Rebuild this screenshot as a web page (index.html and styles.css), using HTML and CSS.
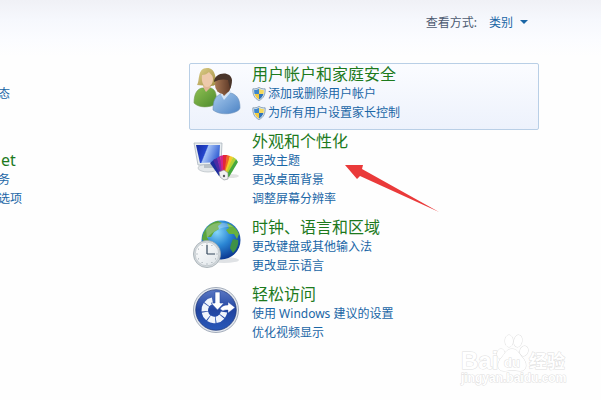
FILE: index.html
```
<!DOCTYPE html>
<html lang="zh-CN">
<head>
    <meta charset="UTF-8">
    <meta name="viewport" content="width=device-width, initial-scale=1.0">
    <title>控制面板</title>
    <link rel="stylesheet" href="styles.css">
</head>
<body>
    <!-- shared shield symbol -->
    <svg class="symbols" aria-hidden="true">
        <symbol id="shield" viewBox="0 0 16 16">
            <path d="M8 .5C6 1.800 3.600 2.300 1 2.100c-.4 6.600 1.900 11 7 13.400 5.100-2.400 7.400-6.800 7-13.400C12.400 2.300 10 1.800 8 .5z" fill="#dbe8f2" stroke="#66839b" stroke-width=".8"/>
            <path d="M8 2C6.500 2.900 4.600 3.400 2.500 3.400 2.400 5.200 2.500 6.700 2.900 8H8z" fill="#3d86cc"/>
            <path d="M8 2c1.500.9 3.400 1.400 5.500 1.400.1 1.800 0 3.300-.4 4.600H8z" fill="#f5d95c"/>
            <path d="M2.900 8C3.800 10.800 5.500 12.800 8 14.200V8z" fill="#f0cb42"/>
            <path d="M13.100 8C12.200 10.800 10.500 12.800 8 14.200V8z" fill="#2f72b8"/>
        </symbol>
    </svg>

    <header class="toolbar">
        <label for="viewBy">查看方式:</label>
        <span class="view-select">
            <select id="viewBy">
                <option>类别</option>
            </select>
        </span>
    </header>

    <main class="panel">
        <div class="column column-left">
            <section class="category tall">
                <a href="#" class="second-line">态</a>
            </section>
            <section class="category">
                <h2><a href="#">et</a></h2>
                <a href="#">务</a>
                <a href="#">选项</a>
            </section>
        </div>

        <div class="column column-right">
            <section class="category active">
                <svg class="icon" viewBox="0 0 48 48" aria-hidden="true">
                    <defs>
                        <linearGradient id="green" x1="0" y1="0" x2="1" y2="1"><stop offset="0" stop-color="#8fc052"/><stop offset="1" stop-color="#4c8a2c"/></linearGradient>
                        <linearGradient id="shirt" x1="0" y1="0" x2="1" y2="1"><stop offset="0" stop-color="#a9cbef"/><stop offset="1" stop-color="#4c83c4"/></linearGradient>
                        <linearGradient id="hair" x1="0" y1="0" x2="1" y2="1"><stop offset="0" stop-color="#ded08a"/><stop offset="1" stop-color="#a18c42"/></linearGradient>
                        <linearGradient id="face" x1="0" y1="0" x2="1" y2="0"><stop offset="0" stop-color="#a77754"/><stop offset="1" stop-color="#5b3726"/></linearGradient>
                    </defs>
                    <path d="M1 36c0-9 3-14 8-15l9 0c5 2 6 7 5 16-7 4-17 4-22-1z" fill="url(#green)" stroke="#739950" stroke-width=".6"/>
                    <path d="M10 20l3 5 5-5-1-5h-6z" fill="#e0b795"/>
                    <path d="M4 18C7 14 4 1 14 1c9 0 8 10 10 15-2 3-5 3-8 3z" fill="url(#hair)"/>
                    <path d="M9 8c3 0 5-1 7-3 2 3 4 3 4 7 0 5-3 8-6 8s-6-4-5-12z" fill="#edc9ab"/>
                    <path d="M20 43c0-9 2-14 8-16l10-1c6 2 9 6 9 15-1 5-18 9-27 2z" fill="url(#shirt)" stroke="#6b91bb" stroke-width=".6"/>
                    <path d="M27 26l4 7 7-8-2-4h-7z" fill="#d3e4f7"/>
                    <path d="M27 23l4 6 6-6-1-4h-8z" fill="#885c40"/>
                    <ellipse cx="30" cy="18" rx="8" ry="9" fill="url(#face)"/>
                    <path d="M21 15C21 5 38 3 39 13c0 4-1 7-2 9l-2-9c-4-1-9-1-14 2z" fill="#493429"/>
                </svg>
                <div class="links">
                    <h2><a href="#">用户帐户和家庭安全</a></h2>
                    <a href="#" class="admin"><svg class="shield" aria-hidden="true"><use href="#shield"/></svg>添加或删除用户帐户</a>
                    <a href="#" class="admin"><svg class="shield" aria-hidden="true"><use href="#shield"/></svg>为所有用户设置家长控制</a>
                </div>
            </section>

            <section class="category">
                <svg class="icon" viewBox="0 0 48 48" aria-hidden="true">
                    <defs>
                        <linearGradient id="screen" x1="0" y1="0" x2="1" y2=".3"><stop offset="0" stop-color="#1428a0"/><stop offset=".45" stop-color="#2446cc"/><stop offset=".5" stop-color="#a4c2f7"/><stop offset="1" stop-color="#3a66d6"/></linearGradient>
                    </defs>
                    <ellipse cx="15" cy="34" rx="10" ry="4" fill="#e3e7ea" stroke="#b6bdc3" stroke-width=".7"/>
                    <path d="M11 29h8l1 5h-9z" fill="#b9c1c7"/>
                    <path d="M1 9l28 0-1 21L5 31z" fill="#e8edf0" stroke="#a9b4bc" stroke-width=".8"/>
                    <path d="M3 11l24 0-1 17L7 29z" fill="url(#screen)"/>
                    <ellipse cx="37" cy="42" rx="9" ry="2" fill="#e2e2e2"/>
                    <path d="M26 42L17 29l5-4 8 15z" fill="#1c2f9e"/>
                    <path d="M27 41L20 26l4-2 6 16z" fill="#4a2da4"/>
                    <path d="M28 40L24 24l3-2 4 18z" fill="#8a2aa5"/>
                    <path d="M29 40L27 22l4-1 1 19z" fill="#d0248a"/>
                    <path d="M30 40V21l4 0-1 19z" fill="#e3273a"/>
                    <path d="M31 40l3-19 3 1-3 19z" fill="#ef6a22"/>
                    <path d="M31 41l6-19 3 1-6 18z" fill="#f6c92b"/>
                    <path d="M32 41l8-18 3 2-8 17z" fill="#b5d133"/>
                    <path d="M33 42l10-17 2 3-9 15z" fill="#45a83d"/>
                    <path d="M26 38l5-2 4 3 0 6-4 1-4-3z" fill="#f1f2f3" stroke="#858b91" stroke-width=".6"/>
                    <circle cx="31" cy="42" r="1.200" fill="#5a5d61"/>
                </svg>
                <div class="links">
                    <h2><a href="#">外观和个性化</a></h2>
                    <a href="#">更改主题</a>
                    <a href="#">更改桌面背景</a>
                    <a href="#">调整屏幕分辨率</a>
                </div>
            </section>

            <section class="category">
                <svg class="icon" viewBox="0 0 48 48" aria-hidden="true">
                    <defs>
                        <radialGradient id="ocean" cx=".4" cy=".3" r=".7"><stop offset="0" stop-color="#84d5fa"/><stop offset=".5" stop-color="#2b86d4"/><stop offset="1" stop-color="#0b3a93"/></radialGradient>
                        <linearGradient id="dial" x1="0" y1="0" x2="1" y2="1"><stop offset="0" stop-color="#fff"/><stop offset="1" stop-color="#dfe5e9"/></linearGradient>
                    </defs>
                    <ellipse cx="31" cy="40" rx="15" ry="3" fill="#dfe2e5"/>
                    <circle cx="28" cy="20" r="19.500" fill="url(#ocean)"/>
                    <path d="M10 14C13 7 18 2 25 1l4 2-4 3 1 3-5 3-3 5-4 0 2 4-3 3-4-5z" fill="#5ba53c"/>
                    <path d="M34 3c6 2 10 6 12 11l-2 5-3-5-5 0-3-4 3-2z" fill="#68b13d"/>
                    <path d="M40 19l5 1c1 5-2 10-5 13l-3-5 1-4z" fill="#3e9146"/>
                    <path d="M13 9C20 1 33 1 40 7 31 6 22 9 14 18z" fill="#fff" opacity=".25"/>
                    <circle cx="14" cy="34" r="13.600" fill="#d3d9dd" stroke="#9aa3a9" stroke-width=".7"/>
                    <circle cx="14" cy="34" r="11.800" fill="url(#dial)" stroke="#b4bbc0" stroke-width=".6"/>
                    <path d="M14 34V25M14 34h8" fill="none" stroke="#33475a" stroke-width="1.200"/>
                    <path d="M14 23.500v1M14 43.500v1M3.500 34h1M23.500 34h1M8.800 25l.5.8M19.200 25l-.5.8M5 28.800l.8.500M5 39.200l.8-.5M8.800 43l.5-.8M19.200 43l-.5-.8M23 39.200l-.8-.5" stroke="#8b969e" stroke-width="1"/>
                </svg>
                <div class="links">
                    <h2><a href="#">时钟、语言和区域</a></h2>
                    <a href="#">更改键盘或其他输入法</a>
                    <a href="#">更改显示语言</a>
                </div>
            </section>

            <section class="category">
                <svg class="icon" viewBox="0 0 48 48" aria-hidden="true">
                    <defs>
                        <linearGradient id="badge" x1="0" y1="0" x2="0" y2="1"><stop offset="0" stop-color="#5a78c4"/><stop offset=".5" stop-color="#2144a0"/><stop offset="1" stop-color="#2858b9"/></linearGradient>
                    </defs>
                    <circle cx="23" cy="23" r="22.500" fill="#e6eaf0" stroke="#8d98aa" stroke-width=".8"/>
                    <circle cx="23" cy="23" r="20.300" fill="url(#badge)" stroke="#1d3575" stroke-width=".7"/>
                    <path d="M19.500 13.800A9.700 9.700 0 1 0 31 25" fill="none" stroke="#f0f4fb" stroke-width="6.500" stroke-dasharray="6.700 .8"/>
                    <path d="M22 5h5v11h4l-6.500 7-6.500-7h4z" fill="#fff" stroke="#2a4da6" stroke-width=".6"/>
                    <path d="M27 22c2-3 4-4 8-4v-3l7 5.500-7 5.500v-3c-3 0-4 0-5 1z" fill="#fff" stroke="#2a4da6" stroke-width=".4"/>
                </svg>
                <div class="links">
                    <h2><a href="#">轻松访问</a></h2>
                    <a href="#">使用 Windows 建议的设置</a>
                    <a href="#">优化视频显示</a>
                </div>
            </section>
        </div>
    </main>

    <svg class="pointer" viewBox="0 0 96 50" aria-hidden="true">
        <path d="M1 1L19 1L18 5L95 48L16 12L13 15z" fill="#ea3a3a"/>
    </svg>

    <svg class="watermark" viewBox="0 0 112 56" role="img" aria-label="Baidu">
        <g class="outline">
            <text x="2" y="37" class="brand">Bai</text>
            <ellipse cx="42" cy="22" rx="4" ry="5"/>
            <ellipse cx="50" cy="9" rx="4" ry="6"/>
            <ellipse cx="59" cy="9" rx="4" ry="6" transform="rotate(12 59 9)"/>
            <ellipse cx="65" cy="19" rx="4" ry="5" transform="rotate(20 65 19)"/>
            <path d="M53 17c6 0 7 5 10 8 5 5 6 14-2 14-3 0-5-1-8-1s-5 1-8 1c-8 0-7-9-2-14 3-3 4-8 10-8z"/>
            <text x="45" y="35" class="paw-text">du</text>
            <text x="70" y="36" class="brand-cn">经验</text>
            <text x="2" y="50" class="site">jingyan.baidu.com</text>
        </g>
    </svg>
</body>
</html>
```
FILE: styles.css
```
* {
    box-sizing: border-box;
}
body {
    margin: 0;
    min-height: 100vh;
    overflow: hidden;
    font-family: "Noto Sans", "Noto Sans CJK SC", sans-serif;
    font-size: 12px;
    line-height: 19px;
    color: #4c5a70;
    background: linear-gradient(#f0f1f6, #f6f8fd 20px, #fbfcff 40px, #fefefe 56px);
}
a {
    color: #1a66a6;
    text-decoration: none;
}
a:hover {
    text-decoration: underline;
}
h2 {
    margin: 0;
    font-size: 16px;
    font-weight: normal;
    line-height: 19px;
}
h2 a {
    color: #1d7a1d;
}
.symbols {
    position: absolute;
    width: 0;
    height: 0;
}

/* top bar */
.toolbar {
    display: flex;
    justify-content: flex-end;
    align-items: center;
    gap: 12px;
    height: 44px;
    padding-right: 73px;
}
.view-select {
    display: flex;
    align-items: center;
    gap: 6px;
}
.view-select select {
    appearance: none;
    padding: 0;
    border: none;
    background: none;
    font: inherit;
    color: #1a66a6;
    cursor: pointer;
}
.view-select::after {
    content: "";
    border: 4px solid transparent;
    border-top-color: #1a66a6;
    border-bottom: none;
}

/* categories */
.panel {
    display: grid;
    grid-template-columns: 189px 1fr;
    padding: 19px 62px 0 0;
}
.category {
    display: flex;
    gap: 11px;
    padding: 1px 3px 7px;
    border: 1px solid transparent;
    border-radius: 2px;
}
.category.active {
    border-color: #b9cfe6;
    background: linear-gradient(#fbfcff, #edf2fc);
}
.column-left {
    margin-left: -2px;
}
.column-left .category {
    flex-direction: column;
    gap: 0;
    padding-left: 0;
    border-left: none;
}
.column-left h2 {
    padding-left: 3px;
}
.column-left .tall {
    min-height: 86px;
}
.second-line {
    margin-top: 19px;
}
.icon {
    flex: none;
    width: 48px;
    height: 48px;
    margin-top: 2px;
}
.links {
    display: flex;
    flex-direction: column;
    align-items: flex-start;
}
.admin {
    display: flex;
    align-items: center;
    gap: 2px;
}
.shield {
    width: 14px;
    height: 16px;
}

/* red arrow over the list */
.pointer {
    position: absolute;
    left: 344px;
    top: 164px;
    width: 96px;
    height: 50px;
}

.watermark {
    position: absolute;
    right: 30px;
    bottom: 12px;
    width: 112px;
    height: 56px;
}
.outline {
    fill: #fff;
    stroke: #dedede;
    stroke-width: 1;
    paint-order: stroke;
    font-family: "Liberation Sans", "Noto Sans CJK SC", sans-serif;
    font-weight: bold;
}
.brand {
    font-size: 24px;
}
.brand-cn {
    font-size: 18px;
}
.paw-text {
    font-size: 13px;
}
.site {
    font-size: 12px;
}
```
